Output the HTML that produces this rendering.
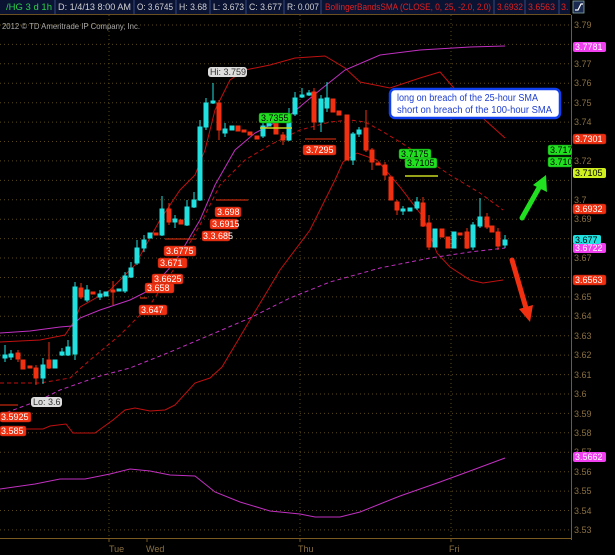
<!DOCTYPE html>
<html><head><meta charset="utf-8"><style>
html,body{margin:0;padding:0;background:#000;width:615px;height:555px;overflow:hidden}
svg{display:block;font-family:"Liberation Sans",sans-serif}
</style></head><body>
<svg width="615" height="555" viewBox="0 0 615 555">
<rect width="615" height="555" fill="#000"/>
<!-- header -->
<rect x="0" y="0" width="570" height="14" fill="#0b1333"/>
<g stroke="#3a4a80" stroke-width="1">
<line x1="55" y1="0" x2="55" y2="14"/><line x1="134" y1="0" x2="134" y2="14"/><line x1="176" y1="0" x2="176" y2="14"/>
<line x1="210" y1="0" x2="210" y2="14"/><line x1="246" y1="0" x2="246" y2="14"/><line x1="284" y1="0" x2="284" y2="14"/>
<line x1="321" y1="0" x2="321" y2="14"/><line x1="494" y1="0" x2="494" y2="14"/><line x1="525" y1="0" x2="525" y2="14"/><line x1="559" y1="0" x2="559" y2="14"/>
</g>
<g font-size="9" fill="#d0d0d0" lengthAdjust="spacingAndGlyphs">
<text x="6" y="10" fill="#2ad04a" textLength="46" lengthAdjust="spacingAndGlyphs">/HG 3 d 1h</text>
<text x="58" y="10" textLength="73" lengthAdjust="spacingAndGlyphs">D: 1/4/13 8:00 AM</text>
<text x="137" y="10" textLength="36" lengthAdjust="spacingAndGlyphs">O: 3.6745</text>
<text x="179" y="10" textLength="28" lengthAdjust="spacingAndGlyphs">H: 3.68</text>
<text x="213" y="10" textLength="31" lengthAdjust="spacingAndGlyphs">L: 3.673</text>
<text x="249" y="10" textLength="33" lengthAdjust="spacingAndGlyphs">C: 3.677</text>
<text x="287" y="10" textLength="32" lengthAdjust="spacingAndGlyphs">R: 0.007</text>
<text x="325" y="10" fill="#e02020" textLength="166" lengthAdjust="spacingAndGlyphs">BollingerBandsSMA (CLOSE, 0, 25, -2.0, 2.0)</text>
<text x="497" y="10" fill="#e02020" textLength="26" lengthAdjust="spacingAndGlyphs">3.6932</text>
<text x="528" y="10" fill="#e02020" textLength="27" lengthAdjust="spacingAndGlyphs">3.6563</text>
<text x="561" y="10" fill="#e02020">3.</text>
</g>
<rect x="573" y="1" width="11" height="12" fill="#1a2a50" stroke="#8aa" stroke-width="0.8"/>
<path d="M575 10 H578 L581 4 H583" stroke="#fff" fill="none" stroke-width="1.2"/>
<line x1="0" y1="14.5" x2="571" y2="14.5" stroke="#6a5020"/>
<!-- grid -->
<g stroke="#5a4a1a" stroke-width="1" stroke-dasharray="1,3">
<line x1="0" y1="25" x2="571" y2="25"/><line x1="0" y1="44.4" x2="571" y2="44.4"/><line x1="0" y1="63.8" x2="571" y2="63.8"/>
<line x1="0" y1="83.3" x2="571" y2="83.3"/><line x1="0" y1="102.7" x2="571" y2="102.7"/><line x1="0" y1="122.1" x2="571" y2="122.1"/>
<line x1="0" y1="141.5" x2="571" y2="141.5"/><line x1="0" y1="160.9" x2="571" y2="160.9"/><line x1="0" y1="180.4" x2="571" y2="180.4"/>
<line x1="0" y1="199.8" x2="571" y2="199.8"/><line x1="0" y1="219.2" x2="571" y2="219.2"/><line x1="0" y1="238.6" x2="571" y2="238.6"/>
<line x1="0" y1="258" x2="571" y2="258"/><line x1="0" y1="277.5" x2="571" y2="277.5"/><line x1="0" y1="296.9" x2="571" y2="296.9"/>
<line x1="0" y1="316.3" x2="571" y2="316.3"/><line x1="0" y1="335.7" x2="571" y2="335.7"/><line x1="0" y1="355.1" x2="571" y2="355.1"/>
<line x1="0" y1="374.6" x2="571" y2="374.6"/><line x1="0" y1="394" x2="571" y2="394"/><line x1="0" y1="413.4" x2="571" y2="413.4"/>
<line x1="0" y1="432.8" x2="571" y2="432.8"/><line x1="0" y1="452.2" x2="571" y2="452.2"/><line x1="0" y1="471.7" x2="571" y2="471.7"/>
<line x1="0" y1="491.1" x2="571" y2="491.1"/><line x1="0" y1="510.5" x2="571" y2="510.5"/><line x1="0" y1="529.9" x2="571" y2="529.9"/>
<line x1="109" y1="15" x2="109" y2="538"/><line x1="300" y1="15" x2="300" y2="538"/><line x1="451" y1="15" x2="451" y2="538"/>
</g>
<line x1="571.5" y1="15" x2="571.5" y2="540" stroke="#7a5a20"/>
<line x1="0" y1="538.5" x2="571" y2="538.5" stroke="#7a5a20"/>
<g stroke="#7a5a20"><line x1="109" y1="538" x2="109" y2="542"/><line x1="147" y1="538" x2="147" y2="542"/><line x1="300" y1="538" x2="300" y2="542"/><line x1="451" y1="538" x2="451" y2="542"/></g>
<g font-size="9" fill="#8a7040">
<text x="109" y="552">Tue</text><text x="146" y="552">Wed</text><text x="298" y="552">Thu</text><text x="449" y="552">Fri</text>
</g>
<g font-size="9" fill="#8a7040">
<text x="574" y="28">3.79</text><text x="574" y="67">3.77</text><text x="574" y="86">3.76</text><text x="574" y="106">3.75</text>
<text x="574" y="125">3.74</text><text x="574" y="164">3.72</text><text x="574" y="203">3.7</text><text x="574" y="222">3.69</text>
<text x="574" y="242">3.68</text><text x="574" y="261">3.67</text><text x="574" y="300">3.65</text><text x="574" y="319">3.64</text>
<text x="574" y="339">3.63</text><text x="574" y="358">3.62</text><text x="574" y="378">3.61</text><text x="574" y="397">3.6</text>
<text x="574" y="417">3.59</text><text x="574" y="436">3.58</text><text x="574" y="455">3.57</text><text x="574" y="475">3.56</text>
<text x="574" y="494">3.55</text><text x="574" y="514">3.54</text><text x="574" y="533">3.53</text>
</g>
<text x="2" y="29" font-size="8.5" fill="#aaa" textLength="138" lengthAdjust="spacingAndGlyphs">2012 © TD Ameritrade IP Company, Inc.</text>
<!-- indicator lines -->
<g fill="none" stroke-width="1">
<polyline stroke="#c01010" points="0,342 40,340 65,335 75,320 80,307 110,290 135,265 160,220 180,190 195,175 205,150 215,110 230,80 245,70 270,65 295,58 325,56 345,68 360,82 390,88 420,78 440,72 460,95 485,120 505,138"/>
<polyline stroke="#c01010" points="0,429 43,429 50,426 66,424 73,433 95,433 113,420 125,410 135,408 150,411 165,410 175,405 195,383 210,378 222,367 250,320 280,270 310,230 335,180 343,162 357,153 377,160 400,187 423,217 437,253 450,267 470,280 483,283 503,280"/>
<polyline stroke="#c01010" stroke-dasharray="4,3" points="0,383 40,383 70,378 90,360 120,335 150,305 180,260 200,225 220,185 245,160 270,145 300,130 330,122 350,120 365,122 380,130 400,142 423,157 450,175 480,193 503,210"/>
<polyline stroke="#c030c0" points="0,333 30,331 60,327 72,326 80,318 100,310 130,300 150,290 175,262 200,220 215,185 235,150 255,133 290,115 320,90 345,70 380,55 420,50 470,47 505,46"/>
<polyline stroke="#c030c0" stroke-dasharray="4,3" points="0,415 40,400 60,390 100,376 130,368 170,352 210,335 250,318 290,298 330,282 380,268 430,258 470,252 505,248"/>
<polyline stroke="#c030c0" points="0,489 35,484 60,479 85,479 110,474 130,469 150,471 170,475 195,476 215,492 240,502 270,511 300,514 315,517 340,517 360,512 400,496 440,482 470,471 505,458"/>
</g>
<!-- candles -->
<g stroke-width="1">
<g stroke="#20e0e0" fill="#20e0e0">
<line x1="5" y1="345" x2="5" y2="362"/><rect x="3" y="355" width="4" height="3"/>
<line x1="11" y1="350" x2="11" y2="360"/><rect x="9" y="354" width="4" height="3"/>
<line x1="43" y1="358" x2="43" y2="384"/><rect x="41" y="365" width="4" height="13"/>
<rect x="53" y="360" width="4" height="8"/><line x1="62" y1="348" x2="62" y2="356"/><rect x="60" y="352" width="4" height="3"/>
<line x1="68" y1="340" x2="68" y2="356"/><rect x="66" y="347" width="4" height="8"/>
<line x1="75" y1="282" x2="75" y2="360"/><rect x="73" y="287" width="4" height="67"/>
<line x1="87" y1="285" x2="87" y2="302"/><rect x="85" y="290" width="4" height="10"/>
<line x1="100" y1="290" x2="100" y2="300"/><rect x="98" y="294" width="4" height="3"/>
<rect x="104" y="292" width="4" height="4"/><rect x="117" y="289" width="4" height="2"/>
<line x1="125" y1="272" x2="125" y2="293"/><rect x="123" y="276" width="4" height="15"/>
<line x1="131" y1="262" x2="131" y2="278"/><rect x="129" y="268" width="4" height="9"/>
<line x1="137" y1="240" x2="137" y2="265"/><rect x="135" y="248" width="4" height="15"/>
<line x1="144" y1="235" x2="144" y2="252"/><rect x="142" y="240" width="4" height="8"/>
<rect x="148" y="233" width="4" height="5"/>
<line x1="162" y1="196" x2="162" y2="236"/><rect x="160" y="209" width="4" height="26"/>
<line x1="175" y1="215" x2="175" y2="228"/><rect x="173" y="219" width="4" height="3"/>
<line x1="187" y1="200" x2="187" y2="226"/><rect x="185" y="207" width="4" height="18"/>
<line x1="194" y1="192" x2="194" y2="208"/><rect x="192" y="200" width="4" height="7"/>
<line x1="200" y1="120" x2="200" y2="201"/><rect x="198" y="127" width="4" height="73"/>
<line x1="206" y1="98" x2="206" y2="130"/><rect x="204" y="103" width="4" height="24"/>
<line x1="213" y1="83" x2="213" y2="104"/><rect x="211" y="101" width="4" height="2"/>
<line x1="225" y1="123" x2="225" y2="137"/><rect x="223" y="129" width="4" height="4"/>
<rect x="230" y="126" width="4" height="4"/>
<line x1="263" y1="122" x2="263" y2="138"/><rect x="261" y="126" width="4" height="10"/>
<rect x="267" y="122" width="4" height="4"/>
<line x1="289" y1="108" x2="289" y2="141"/><rect x="287" y="114" width="4" height="26"/>
<line x1="295" y1="92" x2="295" y2="116"/><rect x="293" y="98" width="4" height="16"/>
<line x1="302" y1="88" x2="302" y2="98"/><rect x="300" y="95" width="4" height="2"/>
<line x1="309" y1="90" x2="309" y2="96"/><rect x="307" y="93" width="4" height="2"/>
<line x1="321" y1="95" x2="321" y2="132"/><rect x="319" y="99" width="4" height="23"/>
<line x1="327" y1="82" x2="327" y2="112"/><rect x="325" y="98" width="4" height="10"/>
<line x1="353" y1="132" x2="353" y2="165"/><rect x="351" y="134" width="4" height="26"/>
<line x1="359" y1="127" x2="359" y2="137"/><rect x="357" y="130" width="4" height="4"/>
<line x1="403" y1="206" x2="403" y2="215"/><rect x="401" y="209" width="4" height="2"/>
<rect x="408" y="208" width="4" height="3"/>
<line x1="417" y1="197" x2="417" y2="210"/><rect x="415" y="202" width="4" height="6"/>
<rect x="433" y="229" width="4" height="18"/>
<rect x="452" y="232" width="4" height="16"/>
<line x1="473" y1="222" x2="473" y2="250"/><rect x="471" y="225" width="4" height="22"/>
<line x1="480" y1="198" x2="480" y2="228"/><rect x="478" y="217" width="4" height="9"/>
<line x1="505" y1="235" x2="505" y2="248"/><rect x="503" y="240" width="4" height="5"/>
</g>
<g stroke="#f03010" fill="#f03010">
<line x1="18" y1="350" x2="18" y2="362"/><rect x="16" y="353" width="4" height="6"/>
<rect x="21" y="360" width="4" height="9"/><rect x="28" y="366" width="4" height="2"/>
<line x1="36" y1="365" x2="36" y2="385"/><rect x="34" y="368" width="4" height="10"/>
<line x1="49" y1="342" x2="49" y2="369"/><rect x="47" y="360" width="4" height="8"/>
<line x1="81" y1="283" x2="81" y2="299"/><rect x="79" y="288" width="4" height="9"/>
<rect x="91" y="292" width="4" height="2"/>
<line x1="113" y1="281" x2="113" y2="305"/><rect x="111" y="290" width="4" height="2"/>
<rect x="154" y="233" width="4" height="2"/>
<line x1="169" y1="203" x2="169" y2="225"/><rect x="167" y="209" width="4" height="13"/>
<rect x="179" y="220" width="4" height="4"/>
<line x1="219" y1="100" x2="219" y2="140"/><rect x="217" y="103" width="4" height="27"/>
<rect x="236" y="126" width="4" height="5"/><rect x="242" y="130" width="4" height="2"/>
<rect x="248" y="132" width="4" height="3"/><rect x="255" y="136" width="4" height="3"/>
<rect x="274" y="122" width="4" height="12"/>
<line x1="283" y1="132" x2="283" y2="145"/><rect x="281" y="135" width="4" height="5"/>
<line x1="314" y1="88" x2="314" y2="130"/><rect x="312" y="92" width="4" height="30"/>
<rect x="331" y="99" width="4" height="13"/><rect x="337" y="111" width="4" height="4"/>
<rect x="345" y="115" width="4" height="45"/>
<line x1="366" y1="110" x2="366" y2="152"/><rect x="364" y="128" width="4" height="22"/>
<line x1="372" y1="148" x2="372" y2="170"/><rect x="370" y="150" width="4" height="12"/>
<rect x="376" y="163" width="4" height="2"/>
<line x1="385" y1="162" x2="385" y2="180"/><rect x="383" y="165" width="4" height="10"/>
<rect x="389" y="177" width="4" height="23"/>
<line x1="397" y1="200" x2="397" y2="215"/><rect x="395" y="202" width="4" height="8"/>
<line x1="423" y1="197" x2="423" y2="227"/><rect x="421" y="203" width="4" height="23"/>
<line x1="429" y1="215" x2="429" y2="250"/><rect x="427" y="223" width="4" height="24"/>
<rect x="440" y="229" width="4" height="8"/><rect x="446" y="237" width="4" height="11"/>
<rect x="458" y="233" width="4" height="2"/>
<line x1="467" y1="228" x2="467" y2="249"/><rect x="465" y="232" width="4" height="16"/>
<line x1="487" y1="213" x2="487" y2="229"/><rect x="485" y="217" width="4" height="10"/>
<rect x="490" y="226" width="4" height="6"/>
<line x1="498" y1="228" x2="498" y2="250"/><rect x="496" y="232" width="4" height="14"/>
</g>
</g>
<!-- level lines -->
<g stroke-width="1">
<line x1="216" y1="200" x2="248" y2="200" stroke="#f03010"/>
<line x1="165" y1="239" x2="196" y2="239" stroke="#f03010"/>
<line x1="305" y1="139" x2="336" y2="139" stroke="#f03010"/>
<line x1="140" y1="298" x2="147" y2="298" stroke="#f03010"/>
<line x1="0" y1="405" x2="18" y2="405" stroke="#f03010"/>
<line x1="260" y1="128" x2="292" y2="128" stroke="#c8d820" stroke-width="1.5"/>
<line x1="405" y1="176" x2="438" y2="176" stroke="#c8d820" stroke-width="1.5"/>
</g>
<!-- labels -->
<g font-size="9">
<g fill="#f03010" stroke="#a02010" stroke-width="0.5">
<rect x="215" y="207" width="26" height="10" rx="2"/><rect x="210" y="219" width="28" height="10" rx="2"/>
<rect x="202" y="231" width="28" height="10" rx="2"/><rect x="164" y="246" width="32" height="10" rx="2"/>
<rect x="158" y="258" width="29" height="10" rx="2"/><rect x="152" y="274" width="31" height="10" rx="2"/>
<rect x="145" y="283" width="29" height="10" rx="2"/><rect x="139" y="305" width="28" height="10" rx="2"/>
<rect x="303" y="145" width="33" height="10" rx="2"/><rect x="0" y="412" width="31" height="10" rx="2"/>
<rect x="0" y="426" width="26" height="10" rx="2"/>
<rect x="573" y="134" width="33" height="10" rx="2"/><rect x="573" y="204" width="33" height="10" rx="2"/>
<rect x="573" y="275" width="33" height="10" rx="2"/>
</g>
<g fill="#fff">
<text x="217" y="215">3.698</text><text x="212" y="227">3.6915</text><text x="203" y="239">3.3.685</text>
<text x="166" y="254">3.6775</text><text x="160" y="266">3.671</text><text x="154" y="282">3.6625</text>
<text x="147" y="291">3.658</text><text x="141" y="313">3.647</text><text x="306" y="153">3.7295</text>
<text x="1" y="420">3.5925</text><text x="1" y="434">3.585</text>
<text x="575" y="142">3.7301</text><text x="575" y="212">3.6932</text><text x="575" y="283">3.6563</text>
</g>
<rect x="573" y="42" width="33" height="10" rx="2" fill="#f040f0"/><text x="575" y="50" fill="#fff">3.7781</text>
<rect x="573" y="243" width="33" height="10" rx="2" fill="#f040f0"/><text x="575" y="251" fill="#fff">3.6722</text>
<rect x="573" y="452" width="33" height="10" rx="2" fill="#f040f0"/><text x="575" y="460" fill="#fff">3.5662</text>
<rect x="573" y="235" width="28" height="9" rx="2" fill="#20e0e0"/><text x="575" y="243" fill="#000">3.677</text>
<g fill="#20e020" stroke="#108010" stroke-width="0.5">
<rect x="259" y="113" width="32" height="10" rx="2"/><rect x="399" y="149" width="32" height="10" rx="2"/>
<rect x="405" y="158" width="32" height="10" rx="2"/><rect x="548" y="145" width="24" height="10" rx="2"/>
<rect x="548" y="157" width="24" height="10" rx="2"/>
</g>
<g fill="#000">
<text x="261" y="121">3.7355</text><text x="401" y="157">3.7175</text><text x="407" y="166">3.7105</text>
<text x="550" y="153">3.717</text><text x="550" y="165">3.710</text>
</g>
<rect x="208" y="67" width="39" height="10" rx="3" fill="#ddd"/><text x="210" y="75" fill="#333">Hi: 3.759</text>
<rect x="31" y="397" width="31" height="10" rx="3" fill="#ddd"/><text x="33" y="405" fill="#333">Lo: 3.6</text>
</g>
<rect x="572" y="145" width="43" height="30" fill="#000"/>
<rect x="573" y="168" width="33" height="10" rx="2" fill="#d0f020"/><text x="575" y="176" font-size="9" fill="#000">3.7105</text>
<text x="574" y="164" font-size="9" fill="#8a7040">3.72</text>
<!-- annotation -->
<rect x="390" y="89" width="170" height="29" rx="5" fill="#fff" stroke="#1040f0" stroke-width="2.5"/>
<text x="397" y="101" font-size="10" fill="#2040d0" textLength="141" lengthAdjust="spacingAndGlyphs">long on breach of the 25-hour SMA</text>
<text x="397" y="113" font-size="10" fill="#2040d0" textLength="155" lengthAdjust="spacingAndGlyphs">short on breach of the 100-hour SMA</text>
<!-- arrows -->
<line x1="522" y1="218" x2="540" y2="186" stroke="#20e020" stroke-width="5" stroke-linecap="round"/>
<polygon points="546,175 547,192 533,185" fill="#20e020"/>
<line x1="512" y1="260" x2="526" y2="308" stroke="#f03010" stroke-width="5" stroke-linecap="round"/>
<polygon points="530,322 519,309 533,305" fill="#f03010"/>
</svg>
</body></html>
